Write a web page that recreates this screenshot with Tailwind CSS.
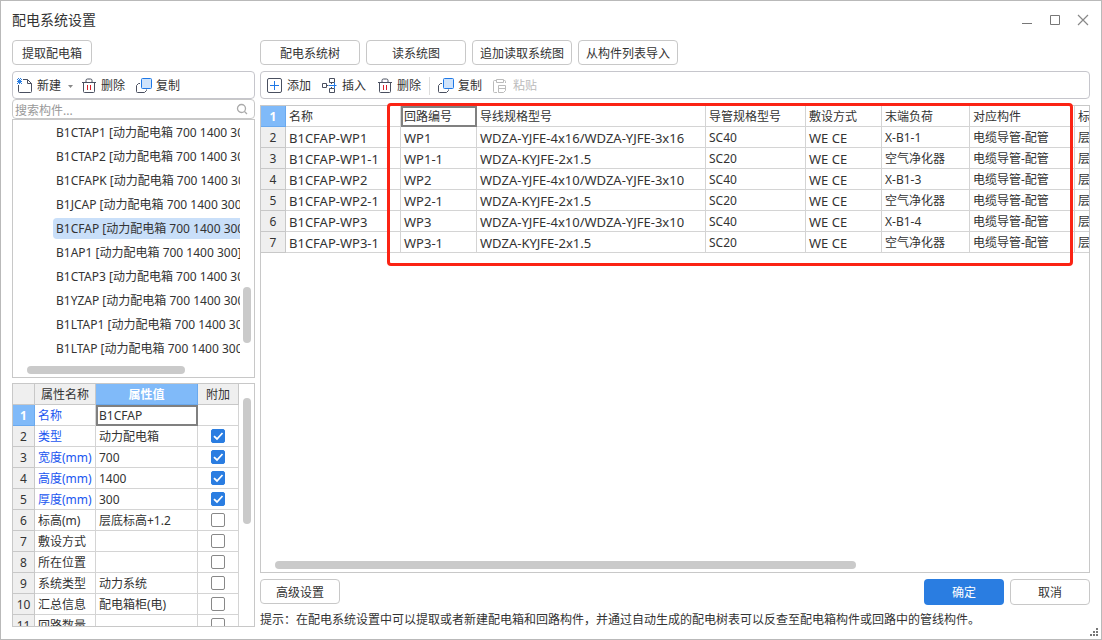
<!DOCTYPE html>
<html lang="zh-CN">
<head>
<meta charset="utf-8">
<title>配电系统设置</title>
<script src="https://cdn.jsdelivr.net/npm/@tailwindcss/browser@4"></script>
</head>
<body class="h-screen bg-white font-['Noto_Sans','Noto_Sans_CJK_SC',sans-serif] text-xs text-[#333]">
<svg class="hidden" aria-hidden="true">
  <symbol id="i-trash" viewBox="0 0 16 16"><g fill="none" stroke="#4a5060"><path d="M1 4.500h14M5 4.500V2.500a1.500 1.500 0 0 1 1.500-1.500h3a1.500 1.500 0 0 1 1.500 1.500v2M2.500 4.500v9a1 1 0 0 0 1 1h9a1 1 0 0 0 1-1v-9"/><path d="M6.500 7v5M9.500 7v5" stroke="#d9202a"/></g></symbol>
  <symbol id="i-copy" viewBox="0 0 16 16"><path d="M4 5.500H2.500L.5 7.500v6a1 1 0 0 0 1 1h7l2-2v-1" fill="none" stroke="#4a5060"/><rect x="5.500" y=".5" width="10" height="10" rx="1" fill="#cfe3fb" stroke="#1f78e6"/></symbol>
  <symbol id="i-tick" viewBox="0 0 14 14"><path d="M3 7.200 6 10l5.500-6" fill="none" stroke="#fff" stroke-width="1.800"/></symbol>
</svg>
<div class="flex h-full flex-col border border-[#b9b9b9] px-[11px] pb-3">
  <header class="mb-0.5 flex h-[37px] shrink-0 items-center justify-between">
    <h1 class="text-sm">配电系统设置</h1>
    <div class="flex gap-4 pr-[1px]">
      <button aria-label="最小化" class="size-3"><svg viewBox="0 0 12 12" class="size-3"><path d="M1 9.500h10" stroke="#777"/></svg></button>
      <button aria-label="最大化" class="size-3"><svg viewBox="0 0 12 12" class="size-3"><path d="M1.500 1.500h9v9h-9z" fill="none" stroke="#777"/></svg></button>
      <button aria-label="关闭" class="size-3"><svg viewBox="0 0 12 12" class="size-3"><path d="M1 1l10 10M11 1 1 11" stroke="#888" stroke-width="1.200"/></svg></button>
    </div>
  </header>

  <main class="flex min-h-0 flex-1 gap-[5px]">
    <aside class="flex w-[243px] shrink-0 flex-col">
      <button class="h-[25px] w-20 shrink-0 rounded border border-[#c8c8c8] pt-0.5">提取配电箱</button>
      <div class="mt-1.5 flex h-7 shrink-0 items-center rounded border border-[#c6c6cc] pt-0.5 pl-1">
        <button class="flex items-center gap-1"><svg viewBox="0 0 16 16" class="size-4"><path d="M6 1.500h4.500l4 4v8a1 1 0 0 1-1 1h-11a1 1 0 0 1-1-1V7M10.500 1.500v4h4" fill="none" stroke="#4a5060"/><path d="M0 1h1v1H0zM2 1h1v1H2zM4 1h1v1H4zM1 2h3v1H1zM0 3h5v1H0zM1 4h3v1H1zM0 5h1v1H0zM2 5h1v1H2zM4 5h1v1H4zM1 0h1v1H1zM3 0h1v1H3z" fill="#2a7de1"/></svg>新建</button>
        <svg viewBox="0 0 5 3" class="ml-[7px] h-[3px] w-[5px]"><path d="M0 0h5L2.500 3z" fill="#888"/></svg>
        <button class="ml-2 flex items-center gap-1"><svg class="size-4"><use href="#i-trash"/></svg>删除</button>
        <button class="ml-[11px] flex items-center gap-1"><svg class="size-4"><use href="#i-copy"/></svg>复制</button>
      </div>
      <div class="flex h-5 shrink-0 items-center rounded border border-[#c8c8c8] px-0.5">
        <input type="search" aria-label="搜索构件" placeholder="搜索构件..." class="h-[18px] min-w-0 flex-1 pt-0.5 placeholder:text-[#999] outline-none">
        <svg viewBox="0 0 12 12" class="mr-1 size-3"><circle cx="5.500" cy="5.500" r="4" fill="none" stroke="#aaa" stroke-width="1.300"/><path d="m8.500 8.500 2.500 2.500" stroke="#aaa" stroke-width="1.300"/></svg>
      </div>
      <div class="relative h-[259px] shrink-0 border border-[#c8c8c8]">
        <ul class="mr-3.5 overflow-hidden pt-0.5 pl-10 [&>li]:mb-[3px] [&>li]:h-[21px] [&>li]:rounded-l [&>li]:pl-[3px] [&>li]:leading-[21px] [&>li]:whitespace-nowrap">
          <li>B1CTAP1 [动力配电箱 700 1400 300]</li>
          <li>B1CTAP2 [动力配电箱 700 1400 300]</li>
          <li>B1CFAPK [动力配电箱 700 1400 300]</li>
          <li>B1JCAP [动力配电箱 700 1400 300]</li>
          <li class="bg-[#c9dff9]">B1CFAP [动力配电箱 700 1400 300]</li>
          <li>B1AP1 [动力配电箱 700 1400 300]</li>
          <li>B1CTAP3 [动力配电箱 700 1400 300]</li>
          <li>B1YZAP [动力配电箱 700 1400 300]</li>
          <li>B1LTAP1 [动力配电箱 700 1400 300]</li>
          <li>B1LTAP [动力配电箱 700 1400 300]</li>
        </ul>
        <div class="absolute top-[167px] right-[3px] h-14 w-2 rounded-full bg-[#cacaca]"></div>
        <div class="absolute bottom-[3px] left-3.5 h-2 w-[158px] rounded-full bg-[#cacaca]"></div>
      </div>
      <div class="relative mt-[5px] min-h-0 flex-1 overflow-hidden border border-[#c8c8c8]">
        <table class="w-[226px] table-fixed border-separate border-spacing-0 leading-[18px] [&_td]:h-[21px] [&_td]:border-r [&_td]:border-b [&_td]:border-[#d4d4d4] [&_td]:p-0 [&_td]:pt-0.5 [&_td]:pl-[3px] [&_td]:whitespace-nowrap [&_td:last-child]:pt-0 [&_th]:h-[21px] [&_th]:border-r [&_th]:border-b [&_th]:border-[#c8c8c8] [&_th]:bg-[#efefef] [&_th]:p-0 [&_th]:pt-0.5 [&_th]:font-normal [&_label]:grid [&_label]:w-full [&_label]:place-items-center [&_label]:pr-[3px] [&_input]:col-start-1 [&_input]:row-start-1 [&_input]:size-3.5 [&_input]:appearance-none [&_input]:rounded-xs [&_input]:border [&_input]:border-[#888] [&_input:checked]:border-[#2a7de1] [&_input:checked]:bg-[#2a7de1] [&_label_svg]:col-start-1 [&_label_svg]:row-start-1 [&_label_svg]:size-3.5">
          <colgroup><col class="w-[22px]"><col class="w-[61px]"><col class="w-[102px]"><col class="w-[41px]"></colgroup>
          <thead><tr><th></th><th>属性名称</th><th class="border-[#6aa9ee]! bg-[#80baf9]! font-bold! text-white">属性值</th><th>附加</th></tr></thead>
          <tbody>
            <tr><th class="border-[#6aa9ee]! bg-[#80baf9]! font-bold! text-white">1</th><td class="text-[#1a56f0]">名称</td><td class="outline-2 -outline-offset-2 outline-[#808080]">B1CFAP</td><td></td></tr>
            <tr><th>2</th><td class="text-[#1a56f0]">类型</td><td>动力配电箱</td><td><label><input type="checkbox" checked aria-label="附加 类型"><svg><use href="#i-tick"/></svg></label></td></tr>
            <tr><th>3</th><td class="text-[#1a56f0]">宽度(mm)</td><td>700</td><td><label><input type="checkbox" checked aria-label="附加 宽度"><svg><use href="#i-tick"/></svg></label></td></tr>
            <tr><th>4</th><td class="text-[#1a56f0]">高度(mm)</td><td>1400</td><td><label><input type="checkbox" checked aria-label="附加 高度"><svg><use href="#i-tick"/></svg></label></td></tr>
            <tr><th>5</th><td class="text-[#1a56f0]">厚度(mm)</td><td>300</td><td><label><input type="checkbox" checked aria-label="附加 厚度"><svg><use href="#i-tick"/></svg></label></td></tr>
            <tr><th>6</th><td>标高(m)</td><td>层底标高+1.2</td><td><label><input type="checkbox" aria-label="附加 标高"></label></td></tr>
            <tr><th>7</th><td>敷设方式</td><td></td><td><label><input type="checkbox" aria-label="附加 敷设方式"></label></td></tr>
            <tr><th>8</th><td>所在位置</td><td></td><td><label><input type="checkbox" aria-label="附加 所在位置"></label></td></tr>
            <tr><th>9</th><td>系统类型</td><td>动力系统</td><td><label><input type="checkbox" aria-label="附加 系统类型"></label></td></tr>
            <tr><th>10</th><td>汇总信息</td><td>配电箱柜(电)</td><td><label><input type="checkbox" aria-label="附加 汇总信息"></label></td></tr>
            <tr><th>11</th><td>回路数量</td><td></td><td><label><input type="checkbox" aria-label="附加 回路数量"></label></td></tr>
          </tbody>
        </table>
        <div class="absolute top-3.5 right-[3px] h-[126px] w-2 rounded-full bg-[#cacaca]"></div>
      </div>
    </aside>

    <section class="flex min-w-0 flex-1 flex-col">
      <div class="flex shrink-0 gap-1.5 [&>button]:h-[25px] [&>button]:w-[100px] [&>button]:rounded [&>button]:border [&>button]:border-[#c8c8c8] [&>button]:pt-0.5">
        <button>配电系统树</button><button>读系统图</button><button>追加读取系统图</button><button>从构件列表导入</button>
      </div>
      <div class="mt-1.5 flex h-7 shrink-0 items-center gap-[11px] rounded border border-[#c6c6cc] pt-0.5 pl-1.5 [&>button]:flex [&>button]:items-center [&>button]:gap-1 [&_svg]:size-4">
        <button><svg viewBox="0 0 16 16"><rect x=".5" y=".5" width="14" height="14" rx="1.500" fill="none" stroke="#4a5060"/><path d="M3 7.500h9M7.500 3v9" stroke="#1f78e6"/></svg>添加</button>
        <button><svg viewBox="0 0 16 16"><g fill="none" stroke="#4a5060"><path d="M.5 5.500h4v4h-4zM7.500.5h5v4h-5zM7.500 10.500h5v4h-5zM4.500 7.500h2M9.500 4.500v1.500M9.500 9v1.500"/><path d="M7 7.500h7.500M12.500 4.500v6" stroke="#1f78e6"/></g></svg>插入</button>
        <button><svg><use href="#i-trash"/></svg>删除</button>
        <span class="-mx-[3px] h-[18px] w-px bg-[#ddd]"></span>
        <button><svg><use href="#i-copy"/></svg>复制</button>
        <button disabled class="text-[#bbb]"><svg viewBox="0 0 16 16" fill="none" stroke="#bbb"><path d="M3.500 2.500h-2a1 1 0 0 0-1 1v10a1 1 0 0 0 1 1h2.500M10.500 2.500h1a1 1 0 0 1 1 1V5M3.500 1.500h7v3h-7zM5.500 7.500h7v5l-2 2h-5zM5.500 10.500h7"/></svg>粘贴</button>
      </div>
      <div class="relative mt-1.5 min-h-0 flex-1">
        <div class="h-full overflow-hidden border border-[#c8c8c8]">
          <table class="w-[914px] table-fixed border-separate border-spacing-0 leading-[18px] [&_td]:h-[21px] [&_td]:border-r [&_td]:border-b [&_td]:border-[#d4d4d4] [&_td]:p-0 [&_td]:pt-0.5 [&_td]:pl-[3px] [&_td]:whitespace-nowrap [&_th]:h-[21px] [&_th]:border-r [&_th]:border-b [&_th]:border-[#c8c8c8] [&_th]:bg-[#efefef] [&_th]:p-0 [&_th]:pt-0.5 [&_th]:font-normal [&_tr:not(:first-child)_td:nth-child(-n+4)]:text-[13px] [&_tr:not(:first-child)_td:nth-child(6)]:text-[13px]">
            <colgroup><col class="w-[25px]"><col class="w-[115px]"><col class="w-[76px]"><col class="w-[229px]"><col class="w-[100px]"><col class="w-[76px]"><col class="w-[88px]"><col class="w-[105px]"><col class="w-[100px]"></colgroup>
            <tbody>
              <tr><th class="border-[#6aa9ee]! bg-[#80baf9]! font-bold! text-white">1</th><td>名称</td><td class="outline-2 -outline-offset-2 outline-[#808080]">回路编号</td><td>导线规格型号</td><td>导管规格型号</td><td>敷设方式</td><td>末端负荷</td><td>对应构件</td><td>标高(m)</td></tr>
              <tr><th>2</th><td>B1CFAP-WP1</td><td>WP1</td><td>WDZA-YJFE-4x16/WDZA-YJFE-3x16</td><td>SC40</td><td>WE CE</td><td>X-B1-1</td><td>电缆导管-配管</td><td>层底标高</td></tr>
              <tr><th>3</th><td>B1CFAP-WP1-1</td><td>WP1-1</td><td>WDZA-KYJFE-2x1.5</td><td>SC20</td><td>WE CE</td><td>空气净化器</td><td>电缆导管-配管</td><td>层底标高</td></tr>
              <tr><th>4</th><td>B1CFAP-WP2</td><td>WP2</td><td>WDZA-YJFE-4x10/WDZA-YJFE-3x10</td><td>SC40</td><td>WE CE</td><td>X-B1-3</td><td>电缆导管-配管</td><td>层底标高</td></tr>
              <tr><th>5</th><td>B1CFAP-WP2-1</td><td>WP2-1</td><td>WDZA-KYJFE-2x1.5</td><td>SC20</td><td>WE CE</td><td>空气净化器</td><td>电缆导管-配管</td><td>层底标高</td></tr>
              <tr><th>6</th><td>B1CFAP-WP3</td><td>WP3</td><td>WDZA-YJFE-4x10/WDZA-YJFE-3x10</td><td>SC40</td><td>WE CE</td><td>X-B1-4</td><td>电缆导管-配管</td><td>层底标高</td></tr>
              <tr><th>7</th><td>B1CFAP-WP3-1</td><td>WP3-1</td><td>WDZA-KYJFE-2x1.5</td><td>SC20</td><td>WE CE</td><td>空气净化器</td><td>电缆导管-配管</td><td>层底标高</td></tr>
            </tbody>
          </table>
        </div>
        <div class="absolute bottom-1 left-[15px] h-2 w-[581px] rounded-full bg-[#cacaca]"></div>
        <div class="pointer-events-none absolute -top-0.5 left-[127px] h-[163px] w-[686px] rounded-sm border-3 border-[#fb2314]"></div>
      </div>
      <footer class="-mb-3 shrink-0 pt-1.5 pb-[9px]">
        <div class="flex gap-1.5">
          <button class="mr-auto h-[25px] w-20 rounded border border-[#c8c8c8] pt-0.5">高级设置</button>
          <button class="h-[26px] w-20 rounded bg-[#2a7de1] pt-0.5 text-white">确定</button>
          <button class="h-[26px] w-20 rounded border border-[#c8c8c8] pt-0.5">取消</button>
        </div>
        <p class="mt-[5px] leading-5">提示：在配电系统设置中可以提取或者新建配电箱和回路构件，并通过自动生成的配电树表可以反查至配电箱构件或回路中的管线构件。</p>
      </footer>
    </section>
  </main>
  <svg viewBox="0 0 8 8" class="absolute right-1 bottom-1 size-2" fill="#777"><path d="M6 0h2v2H6zM3 3h2v2H3zM6 3h2v2H6zM0 6h2v2H0zM3 6h2v2H3zM6 6h2v2H6z"/></svg>
</div>
</body>
</html>
